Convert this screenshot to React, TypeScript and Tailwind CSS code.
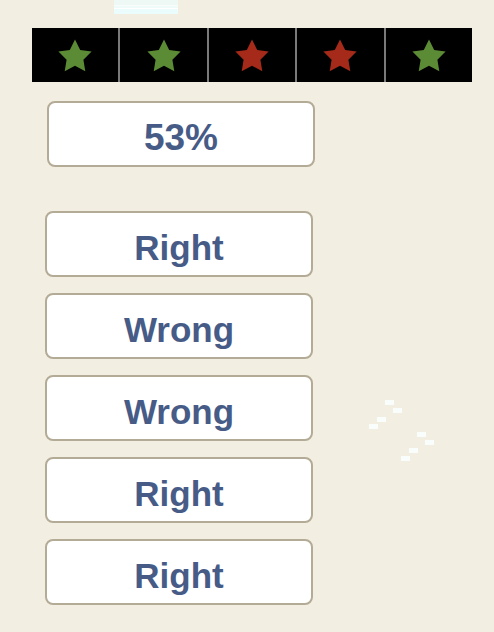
import React from "react";

type Mark = "good" | "bad";

const marks: Mark[] = ["good", "good", "bad", "bad", "good"];
const answers = ["Right", "Wrong", "Wrong", "Right", "Right"];

// faint white dashes floating on the right
const dashes = [
  [385, 400], [393, 408], [377, 417], [369, 424],
  [417, 432], [425, 440], [409, 448], [401, 456],
];

const Star = ({ color }: { color: string }) => (
  <svg width="34" height="33" viewBox="0 0 34 33">
    <polygon
      points="17,0.5 22.2,10.9 33.6,12.6 25.4,20.7 27.3,32.2 17,26.8 6.7,32.2 8.6,20.7 0.4,12.6 11.8,10.9"
      fill={color}
    />
  </svg>
);

const Box = ({ children, className }: { children: React.ReactNode; className?: string }) => (
  <div
    className={
      "w-[268px] h-[66px] bg-white border-2 border-[#b3ab95] rounded-[8px] flex items-center justify-center pt-[8px] font-bold text-[#475b87] " +
      (className ?? "")
    }
  >
    {children}
  </div>
);

const App = () => {
  return (
    <div
      className="relative w-full h-[632px] overflow-hidden bg-[#f2eee2]"
      style={{ fontFamily: '"Liberation Sans", Arial, sans-serif' }}
    >
      <div className="ml-[114px] w-[64px] h-[14px] flex flex-col">
        <div className="h-[5px] bg-[#eef9f6]" />
        <div className="h-[1px] bg-[#f8fdfc]" />
        <div className="h-[2px] bg-[#eefbf8]" />
        <div className="h-[1px] bg-white" />
        <div className="h-[5px] bg-[#eafcfb]" />
      </div>

      <div className="mt-[14px] ml-[32px] w-[440px] h-[54px] bg-black flex">
        {marks.map((m, i) => (
          <div
            key={i}
            className={
              "flex-1 flex items-center justify-center " +
              (i > 0 ? "border-l-2 border-[#7a7a7a]" : "")
            }
          >
            <Star color={m === "good" ? "#5c8b35" : "#a52a1a"} />
          </div>
        ))}
      </div>

      <Box className="ml-[47px] mt-[19px] text-[37px]">53%</Box>

      <div className="ml-[45px] mt-[44px] flex flex-col gap-[16px]">
        {answers.map((a, i) => (
          <Box key={i} className="text-[35px]">
            {a}
          </Box>
        ))}
      </div>

      <svg className="absolute left-0 top-0 pointer-events-none" width="494" height="632">
        {dashes.map(([x, y], i) => (
          <rect key={i} x={x} y={y} width="9" height="5" fill="#f9fdfc" />
        ))}
      </svg>
    </div>
  );
};

export default App;
